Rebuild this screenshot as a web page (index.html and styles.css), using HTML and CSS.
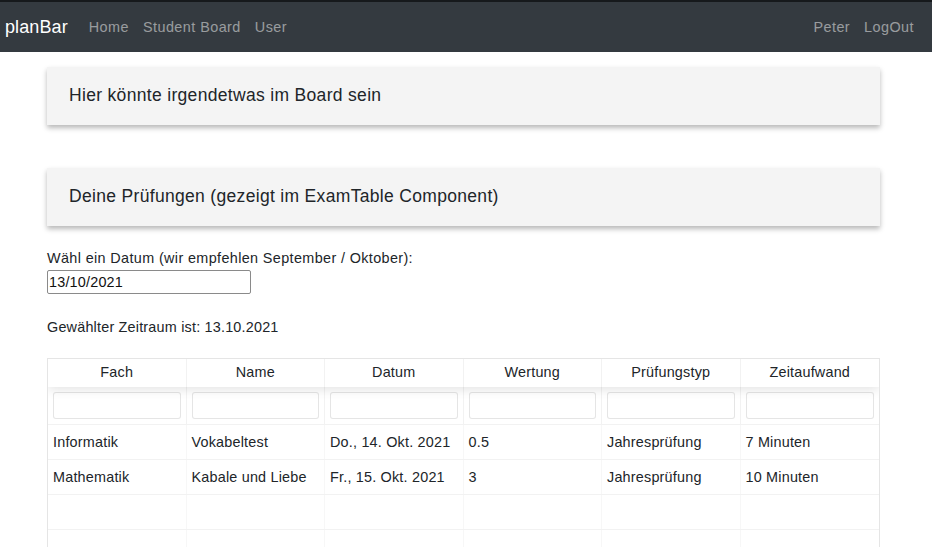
FILE: index.html
```html
<!DOCTYPE html>
<html lang="de">
<head>
<meta charset="utf-8">
<title>planBar</title>
<link rel="stylesheet" href="styles.css">
</head>
<body>
<nav class="navbar">
  <a class="brand" href="#">planBar</a>
  <ul class="nav-links">
    <li><a href="#">Home</a></li>
    <li><a href="#">Student Board</a></li>
    <li><a href="#">User</a></li>
  </ul>
  <ul class="nav-links nav-right">
    <li><a href="#">Peter</a></li>
    <li><a href="#">LogOut</a></li>
  </ul>
</nav>
<main class="content">
  <section class="card card-first">Hier könnte irgendetwas im Board sein</section>
  <section class="card card-second">Deine Prüfungen (gezeigt im ExamTable Component)</section>
  <label class="date-label" for="date">Wähl ein Datum (wir empfehlen September / Oktober):</label>
  <input class="date-input" id="date" type="text" value="13/10/2021">
  <p class="range">Gewählter Zeitraum ist: 13.10.2021</p>
  <div class="rtable">
    <div class="rt-head">
      <div class="rt-th">Fach</div>
      <div class="rt-th">Name</div>
      <div class="rt-th">Datum</div>
      <div class="rt-th">Wertung</div>
      <div class="rt-th">Prüfungstyp</div>
      <div class="rt-th">Zeitaufwand</div>
    </div>
    <div class="rt-filters">
      <div class="rt-fc"><input class="filter" type="text"></div>
      <div class="rt-fc"><input class="filter" type="text"></div>
      <div class="rt-fc"><input class="filter" type="text"></div>
      <div class="rt-fc"><input class="filter" type="text"></div>
      <div class="rt-fc"><input class="filter" type="text"></div>
      <div class="rt-fc"><input class="filter" type="text"></div>
    </div>
    <div class="rt-row">
      <div class="rt-td">Informatik</div>
      <div class="rt-td">Vokabeltest</div>
      <div class="rt-td">Do., 14. Okt. 2021</div>
      <div class="rt-td">0.5</div>
      <div class="rt-td">Jahresprüfung</div>
      <div class="rt-td">7 Minuten</div>
    </div>
    <div class="rt-row">
      <div class="rt-td">Mathematik</div>
      <div class="rt-td">Kabale und Liebe</div>
      <div class="rt-td">Fr., 15. Okt. 2021</div>
      <div class="rt-td">3</div>
      <div class="rt-td">Jahresprüfung</div>
      <div class="rt-td">10 Minuten</div>
    </div>
    <div class="rt-row">
      <div class="rt-td"></div><div class="rt-td"></div><div class="rt-td"></div>
      <div class="rt-td"></div><div class="rt-td"></div><div class="rt-td"></div>
    </div>
    <div class="rt-row">
      <div class="rt-td"></div><div class="rt-td"></div><div class="rt-td"></div>
      <div class="rt-td"></div><div class="rt-td"></div><div class="rt-td"></div>
    </div>
  </div>
</main>
</body>
</html>
```

FILE: styles.css
```css
* { box-sizing: border-box; }
html, body { margin: 0; padding: 0; }
body {
  font-family: "Liberation Sans", Arial, sans-serif;
  font-size: 14.4px;
  letter-spacing: 0.2px;
  color: #212529;
  background: #fff;
}
a { text-decoration: none; }

.navbar {
  display: flex;
  align-items: center;
  height: 52px;
  background: #343a40;
  border-top: 2px solid #16191c;
  padding: 0 0 0 5px;
}
.brand {
  color: #fff;
  font-size: 18px;
  letter-spacing: 0.1px;
  margin-right: 14px;
}
.nav-links {
  display: flex;
  list-style: none;
  margin: 0;
  padding: 0;
}
.nav-links a {
  display: block;
  color: rgba(255,255,255,0.5);
  letter-spacing: 0.45px;
  padding: 8px 7px;
}
.nav-right { margin-left: auto; margin-right: 11px; }

.content {
  padding: 0 0 0 47px;
  width: 880px;
}
.card {
  background: #f4f4f4;
  box-shadow: 0 3px 5px rgba(0,0,0,0.28);
  height: 58px;
  display: flex;
  align-items: center;
  padding-left: 22px;
  padding-bottom: 1px;
  font-size: 17.5px;
  letter-spacing: 0.32px;
}
.card-first { margin-top: 15px; }
.card-second { margin-top: 43px; }

.date-label {
  display: block;
  margin-top: 23px;
  line-height: 18px;
  letter-spacing: 0.37px;
}
.date-input {
  display: block;
  margin-top: 3px;
  width: 204px;
  height: 24px;
  border: 1px solid #8a8a8a;
  border-radius: 2px;
  font: inherit;
  font-size: 14.4px;
  letter-spacing: 0.2px;
  color: #111;
  padding: 0 1px;
}
.range {
  margin: 24px 0 0;
  line-height: 18px;
}

.rtable {
  margin-top: 22px;
  border: 1px solid rgba(0,0,0,0.1);
  border-bottom: none;
  overflow: hidden;
}
.rt-head, .rt-filters, .rt-row {
  display: grid;
  grid-template-columns: repeat(6, 1fr);
}
.rt-head {
  height: 28px;
  box-shadow: 0 2px 12px 0 rgba(0,0,0,0.12);
  position: relative;
  z-index: 1;
}
.rt-th {
  text-align: center;
  padding: 4px 5px 6px;
  line-height: 18px;
  border-right: 1px solid rgba(0,0,0,0.05);
}
.rt-th:last-child, .rt-fc:last-child, .rt-td:last-child { border-right: none; }
.rt-filters {
  height: 38px;
  border-bottom: 1px solid rgba(0,0,0,0.05);
}
.rt-fc {
  padding: 5px 5px 5px 5px;
  border-right: 1px solid rgba(0,0,0,0.05);
}
.filter {
  display: block;
  width: 100%;
  height: 27px;
  border: 1px solid rgba(0,0,0,0.1);
  border-radius: 3px;
  background: #fff;
  outline: none;
}
.rt-row {
  height: 35px;
  border-bottom: 1px solid rgba(0,0,0,0.05);
}
.rt-td {
  padding: 0 5px 0 5px;
  display: flex;
  align-items: center;
  white-space: nowrap;
  overflow: hidden;
  border-right: 1px solid rgba(0,0,0,0.03);
}
```
